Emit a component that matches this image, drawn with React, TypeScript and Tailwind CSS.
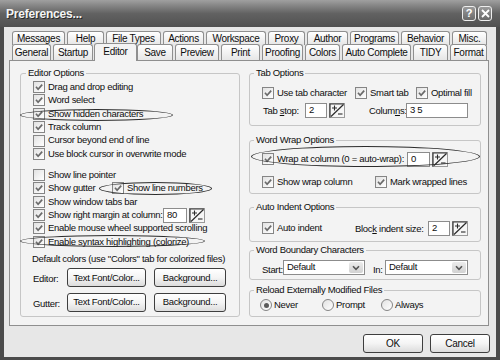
import React from "react";

function Cb({ checked = true }: { checked?: boolean }) {
  return (
    <span className="w-[12px] h-[12px] shrink-0 border border-[#858585] bg-linear-to-br from-[#e2e2e2] to-white flex items-center justify-center">
      {checked && (
        <svg width="10" height="10" viewBox="0 0 10 10">
          <path d="M2 4.8 L4.1 7.2 L8.2 2.6" stroke="#6a6a6a" strokeWidth="1.7" fill="none" />
        </svg>
      )}
    </span>
  );
}

function Radio({ on = false }: { on?: boolean }) {
  return (
    <span className="w-[12px] h-[12px] shrink-0 rounded-full border border-[#858585] bg-linear-to-br from-[#e2e2e2] to-white flex items-center justify-center">
      {on && <span className="w-[5px] h-[5px] rounded-full bg-[#5a5a5a]" />}
    </span>
  );
}

function Spin({ className = "" }: { className?: string }) {
  return (
    <svg width="16" height="15" viewBox="0 0 16 15" className={"shrink-0 " + className}>
      <rect x="0.5" y="0.5" width="15" height="14" fill="#f6f6f6" stroke="#9a9a9a" />
      <path d="M1 0.5 V14.5 M0.5 1 H15" stroke="#3a3a3a" strokeWidth="1.2" />
      <path d="M2 13.5 L14.5 1.5" stroke="#2a2a2a" strokeWidth="1.2" />
      <path d="M3 5 H8 M5.5 2.5 V7.5" stroke="#2a2a2a" strokeWidth="1.1" />
      <path d="M9 11 H13.5" stroke="#2a2a2a" strokeWidth="1.1" />
    </svg>
  );
}

function Input({ className, value }: { className: string; value: string }) {
  return (
    <div className={"h-[15px] shrink-0 bg-white border border-[#8c8c8c] pl-[3px] leading-[12px] " + className}>
      {value}
    </div>
  );
}

function Select({ className }: { className: string }) {
  return (
    <div className={"h-[15px] shrink-0 bg-white border border-[#8c8c8c] flex " + className}>
      <span className="flex-1 pl-[3px] leading-[11px]">Default</span>
      <span className="w-[14px] m-[1px] rounded-[2px] bg-linear-to-b from-[#ececec] to-[#d2d2d2] flex items-center justify-center">
        <svg width="8" height="6" viewBox="0 0 8 6">
          <path d="M1 1.2 L4 4.3 L7 1.2" stroke="#555" strokeWidth="1.6" fill="none" />
        </svg>
      </span>
    </div>
  );
}

function Btn({ className, children }: { className: string; children: React.ReactNode }) {
  return (
    <div
      className={
        "h-[19px] shrink-0 flex items-center justify-center rounded-[3px] border border-[#3e3e3e] bg-linear-to-b from-white via-[#f4f4f4] to-[#dcdcdc] " +
        className
      }
    >
      {children}
    </div>
  );
}

function Group({
  title,
  className,
  legendClass = "left-[5px]",
  children,
}: {
  title: string;
  className: string;
  legendClass?: string;
  children?: React.ReactNode;
}) {
  return (
    <div className={"relative shrink-0 border border-[#c6c6c6] rounded-[3px] " + className}>
      <span className={"absolute -top-[7px] px-[2px] bg-[#f3f3f3] leading-[12px] whitespace-nowrap " + legendClass}>
        {title}
      </span>
      {children}
    </div>
  );
}

function CbRow({
  label,
  checked = true,
  className = "",
  children,
}: {
  label: React.ReactNode;
  checked?: boolean;
  className?: string;
  children?: React.ReactNode;
}) {
  return (
    <div className={"flex items-center h-[13.4px] " + className}>
      <Cb checked={checked} />
      <span className="ml-[3px] whitespace-nowrap">{label}</span>
      {children}
    </div>
  );
}

function Tab({ label, className }: { label: string; className: string }) {
  return (
    <div
      className={
        "shrink-0 flex items-center justify-center border border-b-0 border-[#8f8f8f] rounded-t-[3px] bg-linear-to-b from-white to-[#e6e6e6] text-[10px] whitespace-nowrap " +
        className
      }
    >
      {label}
    </div>
  );
}

export default function App() {
  return (
    <div className="relative w-[500px] h-[360px] overflow-hidden bg-[#4b4b4b] font-['Liberation_Sans',Arial,sans-serif] text-[9.5px] tracking-[-0.3px] text-[#0e0e0e] flex flex-col">
      {/* Title bar */}
      <div className="h-[27px] shrink-0 flex items-center justify-between pl-[6px] pr-[8px] bg-linear-to-b from-[#a0a0a0] via-[#626262] to-[#505050]">
        <span className="text-[12px] font-bold tracking-[-0.2px] text-[#f4f4f4] [text-shadow:1px_1px_0_#2a2a2a]">
          Preferences...
        </span>
        <div className="flex gap-[2px] -mt-[1px]">
          <div className="w-[14px] h-[15px] rounded-[3px] border border-[#eeeeee] bg-linear-to-b from-[#9a9a9a] to-[#6a6a6a] flex items-center justify-center text-[11px] font-bold text-white tracking-normal leading-none">
            ?
          </div>
          <div className="w-[14px] h-[15px] rounded-[3px] border border-[#eeeeee] bg-linear-to-b from-[#9a9a9a] to-[#6a6a6a] flex items-center justify-center">
            <svg width="9" height="9" viewBox="0 0 9 9">
              <path d="M1 1 L8 8 M8 1 L1 8" stroke="white" strokeWidth="1.8" />
            </svg>
          </div>
        </div>
      </div>

      {/* Body */}
      <div className="flex-1 mx-[4px] mb-[3px] bg-[#e7e7e7] flex flex-col">
        {/* Tabs */}
        <div className="pt-[4px] pl-[8px]">
          <div className="flex h-[13px] gap-[2px]">
            <Tab label="Messages" className="w-[53px] h-[14px]" />
            <Tab label="Help" className="w-[37px] h-[14px]" />
            <Tab label="File Types" className="w-[55px] h-[14px]" />
            <Tab label="Actions" className="w-[41px] h-[14px]" />
            <Tab label="Workspace" className="w-[60px] h-[14px]" />
            <Tab label="Proxy" className="w-[37px] h-[14px]" />
            <Tab label="Author" className="w-[41px] h-[14px]" />
            <Tab label="Programs" className="w-[49px] h-[14px]" />
            <Tab label="Behavior" className="w-[49px] h-[14px]" />
            <Tab label="Misc." className="w-[35px] h-[14px]" />
          </div>
          <div className="flex h-[16px] items-start relative z-10">
            <Tab label="General" className="w-[39px] h-[16px]" />
            <Tab label="Startup" className="w-[40px] h-[16px] ml-[2px]" />
            <div className="w-[43px] h-[18px] -mt-[1px] ml-[1px] shrink-0 flex items-center justify-center border border-b-0 border-[#8f8f8f] rounded-t-[3px] bg-[#f3f3f3] text-[10px] pb-[2px]">
              Editor
            </div>
            <Tab label="Save" className="w-[36px] h-[16px]" />
            <Tab label="Preview" className="w-[44px] h-[16px] ml-[2px]" />
            <Tab label="Print" className="w-[39px] h-[16px] ml-[2px]" />
            <Tab label="Proofing" className="w-[41px] h-[16px] ml-[2px]" />
            <Tab label="Colors" className="w-[35px] h-[16px] ml-[2px]" />
            <Tab label="Auto Complete" className="w-[69px] h-[16px] ml-[2px]" />
            <Tab label="TIDY" className="w-[35px] h-[16px] ml-[2px]" />
            <Tab label="Format" className="w-[37px] h-[16px] ml-[2px]" />
          </div>
        </div>

        {/* Panel */}
        <div className="ml-[5px] w-[480px] h-[266px] shrink-0 border border-[#8f8f8f] bg-[#f3f3f3] flex pt-[12px] pl-[10px] gap-[9px]">
          {/* Left: Editor Options */}
          <Group title="Editor Options" className="w-[220px] h-[244px] pl-[12px] pt-[6.3px]">
            <CbRow label="Drag and drop editing" />
            <CbRow label="Word select" />
            <CbRow label="Show hidden characters" />
            <CbRow label="Track column" />
            <CbRow label="Cursor beyond end of line" checked={false} />
            <CbRow label="Use block cursor in overwrite mode" />
            <CbRow label="Show line pointer" checked={false} className="mt-[7.6px]" />
            <div className="flex items-center h-[13.4px]">
              <Cb />
              <span className="ml-[3px] w-[64px] whitespace-nowrap">Show gutter</span>
              <Cb />
              <span className="ml-[3px] whitespace-nowrap">Show line numbers</span>
            </div>
            <CbRow label="Show window tabs bar" />
            <div className="flex items-center h-[13.4px]">
              <Cb />
              <span className="ml-[3px] w-[112px] whitespace-nowrap">Show right margin at column:</span>
              <Input className="w-[24px] ml-[3px]" value="80" />
              <Spin className="ml-[2px]" />
            </div>
            <CbRow label="Enable mouse wheel supported scrolling" />
            <CbRow label="Enable syntax highlighting (colorize)" />
            <div className="mt-[4.3px] -ml-[1px] leading-[12px] whitespace-nowrap">
              Default colors (use "Colors" tab for colorized files)
            </div>
            <div className="mt-[3.5px] flex items-center h-[19px]">
              <span className="w-[34px] pt-[3px]">Editor:</span>
              <Btn className="w-[79px]">Text Font/Color...</Btn>
              <Btn className="w-[72px] ml-[8px]">Background...</Btn>
            </div>
            <div className="mt-[5.5px] flex items-center h-[19px]">
              <span className="w-[34px] pt-[3px]">Gutter:</span>
              <Btn className="w-[79px]">Text Font/Color...</Btn>
              <Btn className="w-[72px] ml-[8px]">Background...</Btn>
            </div>
          </Group>

          {/* Right column */}
          <div className="flex flex-col">
            <Group title="Tab Options" legendClass="left-[4px]" className="w-[232px] h-[53px] pl-[12px] pt-[12.5px]">
              <div className="flex items-center h-[13px]">
                <div className="w-[93px] flex items-center">
                  <Cb />
                  <span className="ml-[3px] whitespace-nowrap">Use tab character</span>
                </div>
                <div className="w-[61px] flex items-center">
                  <Cb />
                  <span className="ml-[3px] whitespace-nowrap">Smart tab</span>
                </div>
                <div className="flex items-center">
                  <Cb />
                  <span className="ml-[3px] whitespace-nowrap">Optimal fill</span>
                </div>
              </div>
              <div className="mt-[3px] flex items-center h-[15px]">
                <span className="w-[42px] ml-[1px] pt-[3px] whitespace-nowrap">
                  Tab <span className="underline">s</span>top:
                </span>
                <Input className="w-[22px]" value="2" />
                <Spin className="ml-[2px]" />
                <span className="w-[37px] ml-[24px] pt-[3px] whitespace-nowrap">
                  Colum<span className="underline">n</span>s:
                </span>
                <Input className="w-[62px]" value="3 5" />
              </div>
            </Group>

            <Group title="Word Wrap Options" legendClass="left-[4px]" className="mt-[14px] w-[232px] h-[54px] pl-[12px] pt-[10.5px]">
              <div className="flex items-center h-[15px]">
                <Cb />
                <span className="ml-[3px] w-[127px] whitespace-nowrap">Wrap at column (0 = auto-wrap):</span>
                <Input className="w-[23px] ml-[3px]" value="0" />
                <Spin className="ml-[2px]" />
              </div>
              <div className="mt-[9px] flex items-center h-[13px]">
                <div className="w-[113px] flex items-center">
                  <Cb />
                  <span className="ml-[3px] whitespace-nowrap">Show wrap column</span>
                </div>
                <Cb />
                <span className="ml-[3px] whitespace-nowrap">Mark wrapped lines</span>
              </div>
            </Group>

            <Group title="Auto Indent Options" legendClass="left-[4px]" className="mt-[13px] w-[232px] h-[35px] pl-[12px] pt-[12.5px]">
              <div className="flex items-center h-[15px]">
                <div className="w-[93px] flex items-center">
                  <Cb />
                  <span className="ml-[3px] whitespace-nowrap">Auto indent</span>
                </div>
                <span className="w-[73px] pt-[3px] whitespace-nowrap">
                  Bloc<span className="underline">k</span> indent size:
                </span>
                <Input className="w-[22px]" value="2" />
                <Spin className="ml-[2px]" />
              </div>
            </Group>

            <Group title="Word Boundary Characters" legendClass="left-[4px]" className="mt-[8px] w-[232px] h-[30px] pl-[12px] pt-[9px]">
              <div className="flex items-center h-[15px]">
                <span className="w-[21px] pt-[5px]">Start:</span>
                <Select className="w-[82px]" />
                <span className="w-[12px] ml-[8px] pt-[5px]">In:</span>
                <Select className="w-[83px]" />
              </div>
            </Group>

            <Group title="Reload Externally Modified Files" legendClass="left-[4px]" className="mt-[10px] w-[232px] h-[27px] pl-[10px] pt-[7.5px]">
              <div className="flex items-center h-[13px]">
                <div className="w-[62px] flex items-center">
                  <Radio on />
                  <span className="ml-[2px]">Never</span>
                </div>
                <div className="w-[59px] flex items-center">
                  <Radio />
                  <span className="ml-[2px]">Prompt</span>
                </div>
                <div className="flex items-center">
                  <Radio />
                  <span className="ml-[2px]">Always</span>
                </div>
              </div>
            </Group>
          </div>
        </div>

        {/* Bottom buttons */}
        <div className="mt-[8px] flex justify-end pr-[6px] gap-[7px]">
          <Btn className="w-[60px] text-[10px]">OK</Btn>
          <Btn className="w-[60px] text-[10px]">Cancel</Btn>
        </div>
      </div>

      {/* Annotation ellipses */}
      <div className="absolute left-[20px] top-[109px] w-[153px] h-[12px] border-[1.5px] border-[#2c2c2c] rounded-[50%] pointer-events-none" />
      <div className="absolute left-[99px] top-[182px] w-[113px] h-[13px] border-[1.5px] border-[#2c2c2c] rounded-[50%] pointer-events-none" />
      <div className="absolute left-[20px] top-[235px] w-[185px] h-[12px] border-[1.5px] border-[#2c2c2c] rounded-[50%] pointer-events-none" />
      <div className="absolute left-[251px] top-[146px] w-[229px] h-[21px] border-[1.5px] border-[#2c2c2c] rounded-[50%] pointer-events-none" />
    </div>
  );
}
